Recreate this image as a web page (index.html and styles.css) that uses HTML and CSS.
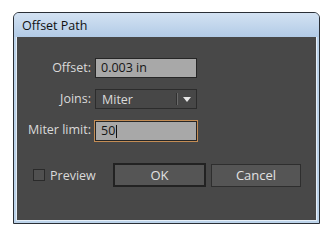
FILE: index.html
```html
<!DOCTYPE html>
<html lang="en">
<head>
    <meta charset="UTF-8">
    <title>Offset Path</title>
    <link rel="stylesheet" href="styles.css">
</head>
<body>
    <div class="window">
        <div class="titlebar">Offset Path</div>
        <div class="panel">
            <div class="form">
                <label class="label">Offset:</label>
                <div class="field">0.003 in</div>

                <label class="label">Joins:</label>
                <div class="select">
                    <span class="select-value">Miter</span>
                    <span class="select-sep"></span>
                    <span class="select-arrow"></span>
                </div>

                <label class="label">Miter limit:</label>
                <div class="field focused">50<span class="caret"></span></div>
            </div>

            <div class="footer">
                <div class="check">
                    <span class="check-box"></span>
                    <span>Preview</span>
                </div>
                <button class="btn btn-default">OK</button>
                <button class="btn">Cancel</button>
            </div>
        </div>
    </div>
</body>
</html>
```

FILE: styles.css
```css
* {
    margin: 0;
    padding: 0;
    box-sizing: border-box;
}

body {
    background: #ffffff;
    font-family: 'Open Sans', 'Noto Sans', sans-serif;
}

.window {
    margin: 12px 0 0 13px;
    width: 307px;
    height: 212px;
    border: 1px solid #2a2f36;
    border-radius: 6px 6px 0 0;
    background: #bcd3ea;
    padding: 0 2px 2px 2px;
    display: flex;
    flex-direction: column;
}

.titlebar {
    height: 24px;
    padding: 4px 0 0 8px;
    margin: 0 -2px;
    font-size: 12.5px;
    color: #111;
    background: linear-gradient(#d3e2f2, #b2cbe6);
    border-radius: 5px 5px 0 0;
}

.panel {
    flex: 1;
    background: #484848;
    border: 1px solid #e4edf6;
    border-top: none;
    padding: 21px 0 0 0;
    color: #dadada;
    font-size: 12.5px;
}

.form {
    display: grid;
    grid-template-columns: 74px 102px;
    grid-auto-rows: 20px;
    column-gap: 4px;
    row-gap: 11px;
}

.label {
    text-align: right;
    line-height: 20px;
}

.field {
    background: #a8a8a8;
    border: 1px solid #262626;
    color: #151515;
    padding-left: 5px;
    line-height: 18px;
    display: flex;
    align-items: center;
}

.field.focused {
    outline: 1px solid #c48d55;
    height: 20px;
    margin-top: 1px;
}

.caret {
    display: inline-block;
    width: 1px;
    height: 13px;
    background: #111;
    margin-left: 1px;
}

.select {
    background: #474747;
    border: 1px solid #2c2c2c;
    display: flex;
    align-items: center;
    padding-left: 6px;
}

.select-value {
    flex: 1;
}

.select-sep {
    width: 2px;
    height: 12px;
    border-left: 1px solid #303030;
    border-right: 1px solid #6a6a6a;
    margin-right: 5px;
}

.select-arrow {
    width: 0;
    height: 0;
    border-left: 4px solid transparent;
    border-right: 4px solid transparent;
    border-top: 5px solid #e6e6e6;
    margin-right: 5px;
}

.footer {
    display: flex;
    align-items: center;
    margin-top: 23px;
    padding-left: 16px;
}

.check {
    display: flex;
    align-items: center;
    gap: 5px;
    width: 80px;
}

.check-box {
    width: 12px;
    height: 12px;
    background: #505050;
    border: 1px solid #2a2a2a;
}

.btn {
    height: 23px;
    background: #555555;
    border: 1px solid #2e2e2e;
    color: #e2e2e2;
    font-family: inherit;
    font-size: 13px;
    width: 90px;
}

.btn-default {
    width: 93px;
    height: 24px;
    border: 2px solid #222222;
    margin-right: 5px;
}
```
